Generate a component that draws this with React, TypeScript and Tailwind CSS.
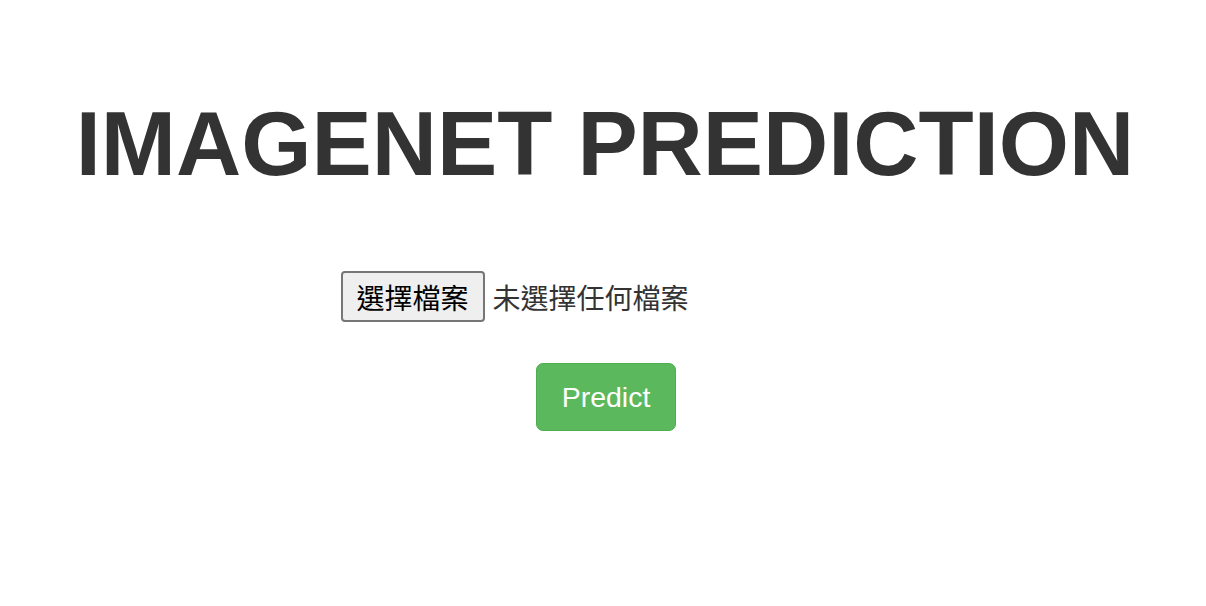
export default function App() {
    return (
        <div className="min-h-[606px] w-full bg-white text-[#333]" style={{ fontFamily: '"Liberation Sans", Arial, "Noto Sans CJK TC", sans-serif' }}>
            <h1 className="pl-[4px] pt-[94px] text-center text-[90.3px] font-bold leading-[99px]">
                IMAGENET PREDICTION
            </h1>
            <form className="mt-[78px] flex flex-col items-center">
                <FileInput />
                <button
                    type="button"
                    className="ml-[6px] mt-[41px] h-[68px] w-[140px] rounded-[7px] border border-[#4cae4c] bg-[#5cb85c] text-[28.5px] text-white"
                >
                    Predict
                </button>
            </form>
        </div>
    )
}

const FileInput = () => {
    return (
        <div className="flex w-[525px] items-center" style={{ fontFamily: '"Noto Sans CJK TC", sans-serif' }}>
            <div className="flex h-[51px] w-[144px] items-center justify-center rounded-[4px] border-2 border-[#767676] bg-[#efefef] text-[28px] text-black">
                選擇檔案
            </div>
            <span className="ml-[8px] text-[28px] text-[#333]">未選擇任何檔案</span>
        </div>
    )
}
